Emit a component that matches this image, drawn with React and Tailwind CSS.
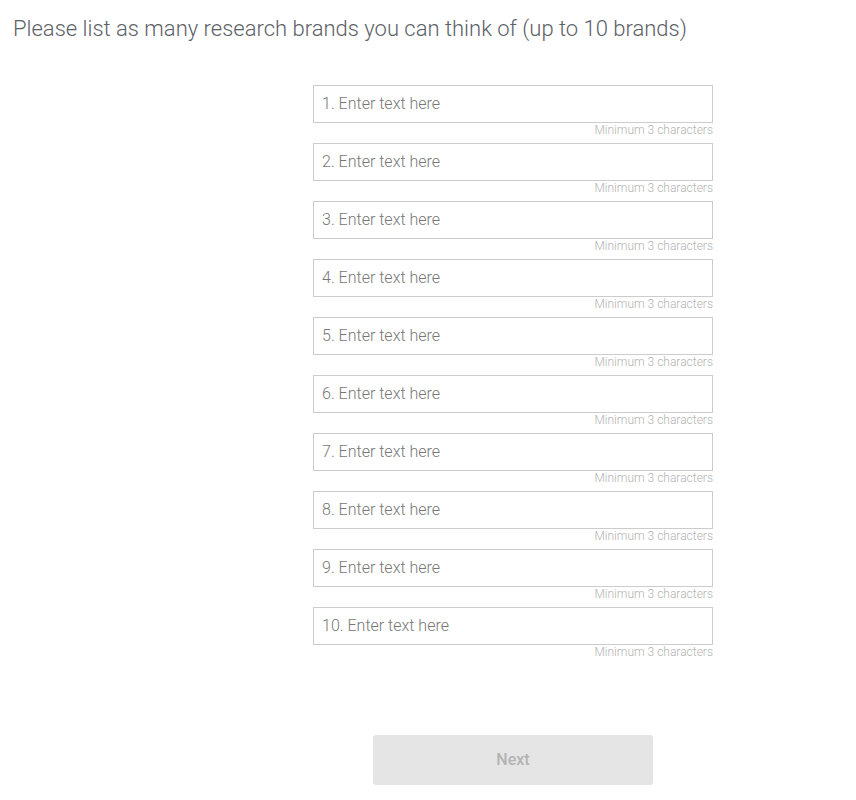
import React from "react";

export default function App() {
  const items = Array.from({ length: 10 }, (_, i) => i + 1);
  return (
    <div className="min-h-[800px] w-[856px] bg-white" style={{ fontFamily: "Roboto, 'Liberation Sans', sans-serif" }}>
      <div className="pl-[13px] pt-[15px] text-[22px] leading-[28px] font-light text-[#5c6166]">
        Please list as many research brands you can think of (up to 10 brands)
      </div>
      <div className="ml-[313px] mt-[42px] flex w-[400px] flex-col">
        {items.map((n) => (
          <div key={n} className="flex flex-col">
            <input
              type="text"
              placeholder={`${n}. Enter text here`}
              className="h-[38px] w-[400px] border border-[#cccccc] bg-white px-[8px] pb-[2px] text-[16px] font-light text-[#555] placeholder:text-[#777] outline-none"
            />
            <div className="h-[20px] pt-[1px] text-right text-[12px] leading-[13px] font-light text-[#b3b3b3]">
              Minimum 3 characters
            </div>
          </div>
        ))}
      </div>
      <div className="ml-[373px] mt-[70px] flex h-[50px] w-[280px] items-center justify-center rounded-[3px] bg-[#e5e5e5] text-[16px] font-medium text-[#b3b3b3]">
        Next
      </div>
    </div>
  );
}
